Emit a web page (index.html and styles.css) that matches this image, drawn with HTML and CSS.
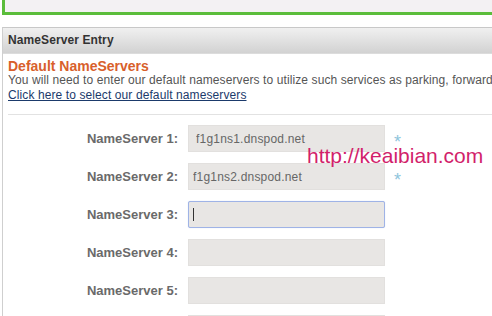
FILE: index.html
```html
<!DOCTYPE html>
<html lang="en">

<head>
    <meta charset="UTF-8">
    <title>NameServer Entry</title>
    <link rel="stylesheet" href="styles.css">
</head>

<body>
    <div class="notice"></div>

    <div class="panel">
        <div class="panel-head">NameServer Entry</div>
        <div class="panel-body">
            <h2 class="title">Default NameServers</h2>
            <p class="desc">You will need to enter our default nameservers to utilize such services as parking, forwarding and hosting.</p>
            <a class="link" href="#">Click here to select our default nameservers</a>
            <div class="sep"></div>

            <div class="rows">
                <div class="row">
                    <label>NameServer 1:</label>
                    <input type="text" class="ns ns-one" value="f1g1ns1.dnspod.net">
                    <span class="req">*</span>
                </div>
                <div class="row">
                    <label>NameServer 2:</label>
                    <input type="text" class="ns" value="f1g1ns2.dnspod.net">
                    <span class="req">*</span>
                </div>
                <div class="row">
                    <label>NameServer 3:</label>
                    <div class="ns focus"><span class="caret"></span></div>
                </div>
                <div class="row">
                    <label>NameServer 4:</label>
                    <input type="text" class="ns">
                </div>
                <div class="row">
                    <label>NameServer 5:</label>
                    <input type="text" class="ns">
                </div>
                <div class="row">
                    <label></label>
                    <input type="text" class="ns">
                </div>
            </div>
        </div>

        <div class="mark">http://keaibian.com</div>
    </div>
</body>

</html>
```

FILE: styles.css
```css
html {
    overflow: hidden;
}

body {
    margin: 0;
    padding: 0 0 0 2px;
    width: 600px;
    height: 316px;
    overflow: hidden;
    background: #fff;
    font-family: "Liberation Sans", Arial, sans-serif;
}

.notice {
    height: 12px;
    background: #f3f1f3;
    border-left: 3px solid #5bbd3b;
    border-bottom: 3px solid #5bbd3b;
    margin-bottom: 12px;
}

.panel {
    position: relative;
    border-left: 1px solid #cfcfcf;
    border-top: 1px solid #c8c8c8;
}

.panel-head {
    height: 25px;
    line-height: 25px;
    padding-left: 5px;
    font-size: 12px;
    font-weight: bold;
    letter-spacing: 0.1px;
    color: #333;
    background: linear-gradient(180deg, #f0f0f0, #d2d2d2);
    border-bottom: 1px solid #dcdcdc;
}

.panel-body {
    padding: 5px 0 0 5px;
}

.title {
    margin: 0;
    font-size: 14px;
    line-height: 14px;
    color: #d8602b;
}

.desc {
    margin: 0;
    font-size: 12px;
    line-height: 15px;
    letter-spacing: 0.1px;
    color: #555;
    white-space: nowrap;
}

.link {
    display: block;
    font-size: 12px;
    line-height: 15px;
    letter-spacing: 0.1px;
    color: #1b3a6b;
}

.sep {
    margin-top: 11px;
    border-top: 1px solid #e2e2e2;
}

.rows {
    display: flex;
    flex-direction: column;
    gap: 11px;
    padding-top: 10px;
    margin-left: -5px;
}

.row {
    display: flex;
    align-items: center;
    gap: 10px;
    height: 27px;
}

.row label {
    width: 175px;
    text-align: right;
    font-size: 13px;
    font-weight: bold;
    color: #6a6a6a;
}

.ns {
    box-sizing: border-box;
    width: 197px;
    height: 27px;
    margin: 0;
    padding: 0 4px;
    background: #e8e6e4;
    border: 1px solid #e2e0de;
    font-family: "Liberation Sans", Arial, sans-serif;
    font-size: 12px;
    letter-spacing: 0.2px;
    color: #666;
    outline: none;
}

.ns-one {
    padding-left: 7px;
}

.focus {
    display: flex;
    align-items: center;
    border: 1px solid #9fb3e6;
    border-radius: 2px;
    box-shadow: 0 0 1px #c3d0f0;
}

.caret {
    width: 1px;
    height: 13px;
    background: #333;
}

.req {
    margin-left: -1px;
    padding-top: 6px;
    font-size: 18px;
    line-height: 12px;
    color: #8ec5dc;
}

.mark {
    position: absolute;
    left: 304px;
    top: 116px;
    font-size: 21px;
    color: #d21f6b;
}
```
